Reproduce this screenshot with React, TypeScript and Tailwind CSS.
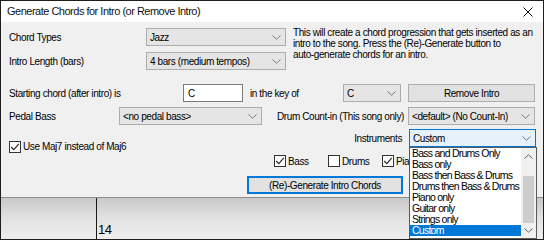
import React from "react";

const Chevron = ({ up = false, color = "#7a7a7a" }: { up?: boolean; color?: string }) => (
  <svg width="9" height="5" viewBox="0 0 9 5" className="shrink-0">
    <path
      d={up ? "M0.5 4.5 L4.5 0.8 L8.5 4.5" : "M0.5 0.5 L4.5 4.2 L8.5 0.5"}
      fill="none"
      stroke={color}
      strokeWidth="1"
    />
  </svg>
);

function Combo({ w, text, focused = false }: { w: string; text: string; focused?: boolean }) {
  return (
    <div
      className={`flex h-[18px] shrink-0 items-center justify-between border pl-[3px] pr-[4px] ${w} ${
        focused ? "border-[#0078d7] bg-[#e5f1fb]" : "border-[#adadad] bg-[#e5e5e5]"
      }`}
    >
      <span className="truncate whitespace-nowrap">{text}</span>
      <Chevron />
    </div>
  );
}

const Check = ({ checked }: { checked: boolean }) => (
  <span className="flex h-[12px] w-[12px] shrink-0 items-center justify-center border border-[#333333] bg-white">
    {checked && (
      <svg width="10" height="10" viewBox="0 0 10 10">
        <path d="M1.2 5 L3.8 7.6 L8.8 1.8" fill="none" stroke="#222222" strokeWidth="1.1" />
      </svg>
    )}
  </span>
);

const listItems = [
  "Bass and Drums Only",
  "Bass only",
  "Bass then Bass & Drums",
  "Drums then Bass & Drums",
  "Piano only",
  "Guitar only",
  "Strings only",
  "Custom",
];

export default function App() {
  return (
    <div className="relative flex h-[240px] w-[544px] flex-col overflow-hidden border border-[#1e1e1e] bg-[#f0f0f0] font-['Liberation_Sans',Arial,sans-serif] text-[10px] tracking-[-0.4px] text-black">
      {/* Dialog */}
      <div className="flex h-[196px] shrink-0 flex-col">
        {/* Title bar */}
        <div className="flex h-[21px] shrink-0 items-center justify-between bg-white pl-[6px] pr-[10px]">
          <span className="whitespace-nowrap text-[11px] tracking-[-0.5px] text-[#111111]">
            Generate Chords for Intro (or Remove Intro)
          </span>
          <svg width="10" height="10" viewBox="0 0 10 10">
            <path d="M0.5 0.5 L9.5 9.5 M9.5 0.5 L0.5 9.5" stroke="#111111" strokeWidth="1" />
          </svg>
        </div>

        {/* Body */}
        <div className="flex flex-1 flex-col pl-[8px] pt-[6px]">
          {/* Top section */}
          <div className="flex">
            <div className="flex flex-col gap-[6px]">
              <div className="flex h-[18px] items-center">
                <span className="w-[137px] shrink-0 whitespace-nowrap">Chord Types</span>
                <Combo w="w-[140px]" text="Jazz" />
              </div>
              <div className="flex h-[18px] items-center">
                <span className="w-[137px] shrink-0 whitespace-nowrap">Intro Length (bars)</span>
                <Combo w="w-[140px]" text="4 bars (medium tempos)" />
              </div>
            </div>
            <div className="-mt-[1px] ml-[7px] whitespace-nowrap leading-[11px]">
              This will create a chord progression that gets inserted as an
              <br />
              intro to the song. Press the (Re)-Generate button to
              <br />
              auto-generate chords for an intro.
            </div>
          </div>

          {/* Row A */}
          <div className="mt-[14px] flex h-[18px] items-center">
            <span className="w-[174px] shrink-0 whitespace-nowrap">Starting chord (after intro) is</span>
            <div className="flex h-[18px] w-[60px] shrink-0 items-center border border-[#7a7a7a] bg-white pl-[4px]">
              C
            </div>
            <span className="ml-[7px] w-[93px] shrink-0 whitespace-nowrap">in the key of</span>
            <Combo w="w-[58px]" text="C" />
            <div className="ml-[7px] flex h-[18px] w-[127px] shrink-0 items-center justify-center border border-[#adadad] bg-[#e1e1e1]">
              Remove Intro
            </div>
          </div>

          {/* Row B */}
          <div className="mt-[5px] flex h-[18px] items-center">
            <span className="w-[110px] shrink-0 whitespace-nowrap">Pedal Bass</span>
            <Combo w="w-[143px]" text="<no pedal bass>" />
            <span className="ml-[15px] w-[131px] shrink-0 whitespace-nowrap">Drum Count-in (This song only)</span>
            <Combo w="w-[127px]" text="<default> (No Count-In)" />
          </div>

          {/* Row C */}
          <div className="mt-[4px] flex h-[18px] items-start">
            <div className="mt-[10px] flex w-[300px] shrink-0 items-center gap-[2px]">
              <Check checked />
              <span className="whitespace-nowrap">Use Maj7 instead of Maj6</span>
            </div>
            <div className="flex h-[18px] items-center">
              <span className="w-[93px] shrink-0 whitespace-nowrap text-right">Instruments</span>
              <div className="ml-[7px]">
                <Combo w="w-[127px]" text="Custom" focused />
              </div>
            </div>
          </div>

          {/* Row D */}
          <div className="ml-[265px] mt-[8px] flex h-[12px] items-center">
            <div className="flex w-[54px] shrink-0 items-center gap-[2px]">
              <Check checked />
              <span>Bass</span>
            </div>
            <div className="flex w-[54px] shrink-0 items-center gap-[2px]">
              <Check checked={false} />
              <span>Drums</span>
            </div>
            <div className="flex shrink-0 items-center gap-[2px]">
              <Check checked />
              <span>Piano</span>
            </div>
          </div>

          {/* Row E */}
          <div className="ml-[238px] mt-[9px] flex h-[18px] w-[156px] items-center justify-center border-2 border-[#0078d7] bg-[#e1e1e1]">
            (Re)-Generate Intro Chords
          </div>
        </div>
      </div>

      {/* Background below dialog */}
      <div className="flex flex-1 border-t border-[#8c8c8c] bg-linear-to-b from-[#c8c8c8] via-[#e2e2e2] to-[#efefef]">
        <div className="w-[95px] shrink-0" />
        <div className="flex flex-1 flex-col justify-end border-l border-[#1a1a1a] pb-[3px] pl-[1px] text-[13px] leading-[13px] tracking-[-0.5px]">
          14
        </div>
      </div>

      {/* Open dropdown list */}
      <div className="absolute left-[408px] top-[146px] flex h-[92px] w-[128px] border border-[#5a5a5a] bg-white">
        <div className="flex flex-1 flex-col">
          {listItems.map((t) => (
            <div
              key={t}
              className={`flex h-[11px] items-center overflow-hidden whitespace-nowrap pl-[2px] text-[10.5px] leading-[11px] tracking-[-0.75px] ${
                t === "Custom" ? "bg-[#0078d7] text-white" : "text-black"
              }`}
            >
              {t}
            </div>
          ))}
        </div>
        <div className="flex w-[15px] shrink-0 flex-col bg-[#f0f0f0]">
          <div className="flex h-[16px] items-center justify-center">
            <Chevron up color="#606060" />
          </div>
          <div className="h-[12px]" />
          <div className="mx-[2px] h-[47px] bg-[#cdcdcd]" />
          <div className="flex flex-1 items-center justify-center">
            <Chevron color="#606060" />
          </div>
        </div>
      </div>
    </div>
  );
}
